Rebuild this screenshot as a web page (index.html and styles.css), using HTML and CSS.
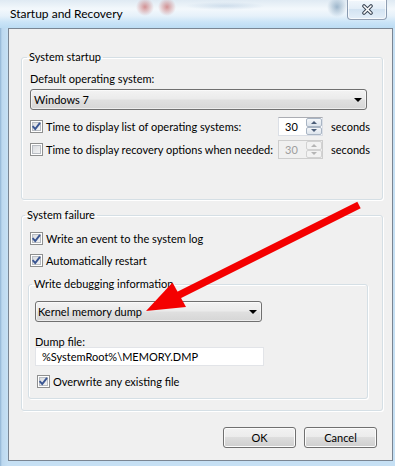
FILE: index.html
```html
<!DOCTYPE html>
<html lang="en">
  <head>
    <meta charset="UTF-8" />
    <title>Startup and Recovery</title>
    <link rel="stylesheet" href="styles.css">
  </head>

  <body>
    <div class="titlebar">
      <span class="title">Startup and Recovery</span>
      <div class="close-button">
        <svg width="15" height="11" viewBox="0 0 15 11">
          <path d="M4 2 L11 9 M11 2 L4 9" stroke="#3c4756" stroke-width="3.6" stroke-linecap="round" />
          <path d="M4 2 L11 9 M11 2 L4 9" stroke="#fff" stroke-width="1.6" stroke-linecap="round" />
        </svg>
      </div>
    </div>

    <div class="client">
      <!-- System startup -->
      <fieldset class="group group-startup">
        <legend>System startup</legend>
        <div class="field-label">Default operating system:</div>
        <div class="combo combo-os">
          <span>Windows 7</span>
          <i class="combo-arrow"></i>
        </div>
        <div class="timer-row">
          <label class="check-label">
            <span class="checkbox">
              <svg width="11" height="11" viewBox="0 0 11 11"><path d="M1.6 5.2 L4.2 8 L9 1.8" fill="none" stroke="#3a5692" stroke-width="1.9" /></svg>
            </span>
            Time to display list of operating systems:
          </label>
          <div class="spinner">
            <span class="spin-value">30</span>
            <span class="spin-buttons">
              <span class="spin-btn"><i class="tri-up"></i></span>
              <span class="spin-btn"><i class="tri-down"></i></span>
            </span>
          </div>
          <span>seconds</span>
        </div>
        <div class="timer-row">
          <label class="check-label">
            <span class="checkbox"></span>
            Time to display recovery options when needed:
          </label>
          <div class="spinner disabled">
            <span class="spin-value">30</span>
            <span class="spin-buttons">
              <span class="spin-btn"><i class="tri-up"></i></span>
              <span class="spin-btn"><i class="tri-down"></i></span>
            </span>
          </div>
          <span>seconds</span>
        </div>
      </fieldset>

      <!-- System failure -->
      <fieldset class="group group-failure">
        <legend>System failure</legend>
        <label class="check-label check-row">
          <span class="checkbox">
            <svg width="11" height="11" viewBox="0 0 11 11"><path d="M1.6 5.2 L4.2 8 L9 1.8" fill="none" stroke="#3a5692" stroke-width="1.9" /></svg>
          </span>
          Write an event to the system log
        </label>
        <label class="check-label check-row">
          <span class="checkbox">
            <svg width="11" height="11" viewBox="0 0 11 11"><path d="M1.6 5.2 L4.2 8 L9 1.8" fill="none" stroke="#3a5692" stroke-width="1.9" /></svg>
          </span>
          Automatically restart
        </label>

        <fieldset class="group group-debug">
          <legend>Write debugging information</legend>
          <div class="combo combo-dump">
            <span>Kernel memory dump</span>
            <i class="combo-arrow"></i>
          </div>
          <div class="field-label dump-label">Dump file:</div>
          <div class="textbox">%SystemRoot%\MEMORY.DMP</div>
          <label class="check-label check-row overwrite-row">
            <span class="checkbox">
              <svg width="11" height="11" viewBox="0 0 11 11"><path d="M1.6 5.2 L4.2 8 L9 1.8" fill="none" stroke="#3a5692" stroke-width="1.9" /></svg>
            </span>
            Overwrite any existing file
          </label>
        </fieldset>
      </fieldset>

      <div class="buttons">
        <button class="button">OK</button>
        <button class="button">Cancel</button>
      </div>
    </div>

    <!-- annotation drawn over the dialog -->
    <svg class="red-arrow" width="395" height="466" viewBox="0 0 395 466">
      <line x1="359" y1="205" x2="176" y2="296.5" stroke="#f40000" stroke-width="7.5" />
      <polygon points="146,311 172.5,282.5 186,307" fill="#f40000" />
    </svg>
  </body>
</html>
```

FILE: styles.css
```css
* {
  box-sizing: border-box;
}

body {
  position: relative;
  width: 395px;
  height: 466px;
  margin: 0;
  overflow: hidden;
  font-family: Lato, "Liberation Sans", sans-serif;
  font-size: 11px;
  color: #000;
  background: linear-gradient(to right, #8fb3d3 0, #bcd8ef 2px, #c6e0f4 8px, #c6e0f4 100%);
}

/* window frame */
.titlebar {
  display: flex;
  align-items: flex-start;
  height: 28px;
  padding-left: 10px;
  background:
    radial-gradient(circle at 145px 7px, rgba(190, 80, 80, 0.6) 0, rgba(190, 80, 80, 0) 9px),
    radial-gradient(circle at 167px 7px, rgba(190, 80, 80, 0.6) 0, rgba(190, 80, 80, 0) 9px),
    radial-gradient(circle at 337px 7px, rgba(90, 130, 165, 0.55) 0, rgba(90, 130, 165, 0) 10px),
    radial-gradient(ellipse 40px 4px at 225px 6px, rgba(150, 180, 210, 0.35), rgba(150, 180, 210, 0)),
    linear-gradient(#dfeaf3 0, #f3f8fc 9px, #e6f1fa 16px, #cbe4f7 22px, #bcdcf3 28px);
}

.title {
  margin-top: 7px;
  line-height: 14px;
  font-size: 12px;
}

.close-button {
  display: flex;
  align-items: center;
  justify-content: center;
  width: 40px;
  height: 20px;
  margin-left: auto;
  margin-right: 8px;
  border: 1px solid rgba(70, 90, 120, 0.55);
  border-top: none;
  border-radius: 0 0 4px 4px;
  background: linear-gradient(#f2f7fc, #e2edf7 50%, #d3e3f2 50%, #e4eff9);
  box-shadow: inset 0 0 0 1px rgba(255, 255, 255, 0.7);
}

.client {
  width: 385px;
  height: 433px;
  margin-left: 8px;
  padding: 21px 9px 0 12px;
  border: 1px solid #7a8592;
  background: #f0f0f0;
}

/* group boxes */
.group {
  margin: 0;
  min-width: 0;
  padding: 0 15px 0 8px;
  border: 1px solid #d5dfe5;
  border-radius: 3px;
  box-shadow: inset 1px 1px 0 #fff, 1px 1px 0 #fff;
}

.group legend {
  margin-left: -3px;
  padding: 0 2px;
  line-height: 14px;
}

.group-startup {
  padding-top: 8px;
  padding-bottom: 40px;
}

.group-failure {
  margin-top: 8px;
  padding: 8px 14px 11px 6px;
}

.group-debug {
  margin-top: 9px;
  padding: 10px 6px 9px 6px;
}

.field-label {
  line-height: 14px;
}

/* combo boxes */
.combo {
  display: flex;
  align-items: center;
  height: 21px;
  border: 1px solid #707070;
  border-radius: 3px;
  background: linear-gradient(#f3f3f3, #ebebeb 45%, #dfdfdf 55%, #d6d6d6);
  box-shadow: inset 0 0 0 1px rgba(255, 255, 255, 0.55);
}

.combo-os {
  margin-top: 3px;
  padding-left: 3px;
}

.combo-dump {
  width: 227px;
  padding-left: 2px;
}

.combo-arrow {
  margin-left: auto;
  margin-right: 4px;
  border-left: 4px solid transparent;
  border-right: 4px solid transparent;
  border-top: 4px solid #000;
}

/* checkboxes */
.check-label {
  display: flex;
  align-items: center;
  gap: 3px;
}

.check-row {
  height: 16px;
  padding-left: 2px;
}

.check-row + .check-row {
  margin-top: 6px;
}

.checkbox {
  display: flex;
  align-items: center;
  justify-content: center;
  flex: none;
  width: 13px;
  height: 13px;
  border: 1px solid #8e8f8f;
  background: linear-gradient(135deg, #d3d6db, #f9f9f9);
  box-shadow: inset 0 0 0 1px #fff, inset 0 0 0 2px #b8bcc2;
}

.checkbox svg {
  display: block;
}

/* numeric spinners */
.timer-row {
  display: grid;
  grid-template-columns: 240px 45px auto;
  align-items: center;
  column-gap: 8px;
  height: 19px;
}

.combo-os + .timer-row {
  margin-top: 7px;
}

.timer-row + .timer-row {
  margin-top: 4px;
}

.timer-row .check-label {
  margin-right: -8px;
}

.spinner {
  display: flex;
  height: 19px;
  border: 1px solid #dbdfe6;
  border-top-color: #abadb3;
  background: #fff;
}

.spin-value {
  flex: 1;
  padding-left: 6px;
  line-height: 17px;
}

.spin-buttons {
  display: flex;
  flex-direction: column;
  width: 16px;
}

.spin-btn {
  display: flex;
  flex: 1;
  align-items: center;
  justify-content: center;
  border: 1px solid #a9b5c4;
  border-radius: 2px;
  background: linear-gradient(#f4f6f9, #dde4ec);
}

.tri-up,
.tri-down {
  border-left: 3px solid transparent;
  border-right: 3px solid transparent;
}

.tri-up {
  border-bottom: 3px solid #4b5d78;
}

.tri-down {
  border-top: 3px solid #4b5d78;
}

.spinner.disabled {
  border-color: #cdcdcd;
  background: #f0f0f0;
  color: #9d9d9d;
}

.spinner.disabled .spin-btn {
  border-color: #d2d2d2;
  background: #f2f2f2;
}

.spinner.disabled .tri-up {
  border-bottom-color: #b5b5b5;
}

.spinner.disabled .tri-down {
  border-top-color: #b5b5b5;
}

/* dump file */
.dump-label {
  margin-top: 14px;
  line-height: 11px;
}

.textbox {
  width: 229px;
  height: 19px;
  padding-left: 6px;
  border: 1px solid #e2e4e8;
  background: #fff;
  line-height: 17px;
}

.overwrite-row {
  margin-top: 7px;
}

/* dialog buttons */
.buttons {
  display: flex;
  justify-content: flex-end;
  gap: 8px;
  margin-top: 16px;
  padding-right: 6px;
}

.button {
  width: 73px;
  height: 21px;
  padding: 0;
  border: 1px solid #707070;
  border-radius: 3px;
  background: linear-gradient(#f2f2f2, #ebebeb 50%, #dddddd 50%, #cfcfcf);
  box-shadow: inset 0 0 0 1px #fcfcfc;
  font: inherit;
  color: #000;
}

.red-arrow {
  position: absolute;
  top: 0;
  left: 0;
  pointer-events: none;
}
```
